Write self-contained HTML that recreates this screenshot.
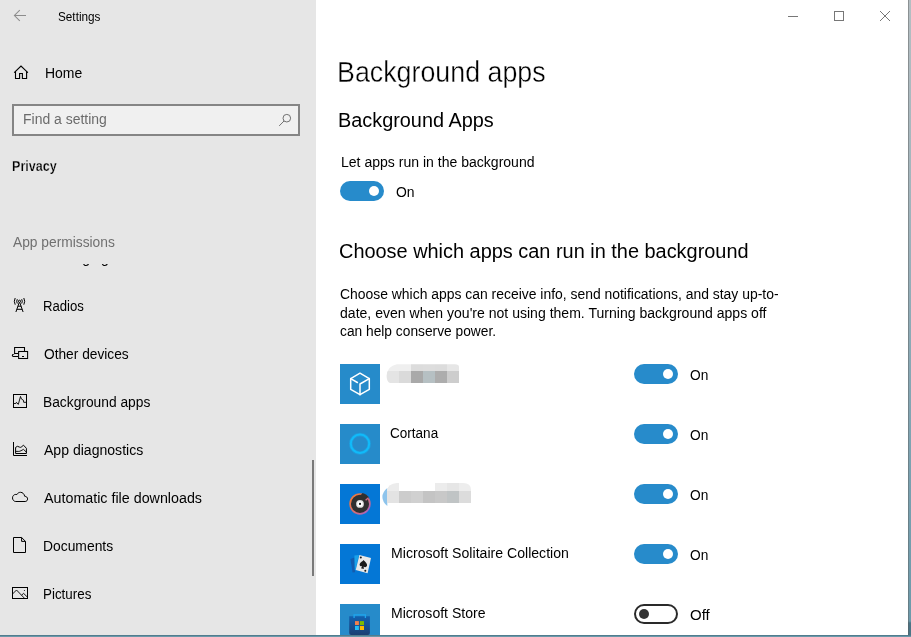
<!DOCTYPE html>
<html><head><meta charset="utf-8"><title>Settings</title>
<style>
html,body{margin:0;padding:0;}
body{will-change:transform;width:911px;height:637px;overflow:hidden;position:relative;background:#fff;font-family:"Liberation Sans",sans-serif;color:#000;font-size:14px;}
.abs{position:absolute;white-space:nowrap;line-height:1;}
#side{position:absolute;left:0;top:0;width:316px;height:637px;background:#e6e6e6;}
.t{position:absolute;white-space:nowrap;line-height:20px;height:20px;transform-origin:0 50%;}
.tog{position:absolute;width:44px;height:20px;border-radius:10px;background:#278bcb;}
.tog i{position:absolute;left:29px;top:5px;width:10px;height:10px;border-radius:5px;background:#fff;}
.tog.off{background:transparent;box-sizing:border-box;border:2px solid #2a2a2a;}
.tog.off i{left:3px;top:3px;background:#333;}
.tile{position:absolute;left:340px;width:40px;height:40px;background:#268bca;overflow:hidden;}
</style></head><body>
<div id="side"></div>
<div class="abs" style="left:12px;top:104px;width:284px;height:28px;border:2px solid #858585;background:#f0f0f0;"></div>
<div class="abs" style="left:43px;top:264px;width:200px;height:10px;overflow:hidden;"><div class="t" style="left:-2px;top:-16px;font-size:14px;">Messaging</div></div>
<div class="abs" style="left:312px;top:460px;width:2px;height:116px;background:#7a7a7a;"></div>
<svg class="abs" style="left:0;top:0" width="911" height="637" viewBox="0 0 911 637" fill="none">
<!-- back arrow -->
<path d="M19.8 10.1 L14.4 15.5 L19.8 20.9 M14.4 15.5 H26" stroke="#8c8c8c" stroke-width="1.05"/>
<!-- home -->
<path d="M14.2 72.7 L21 66 L27.9 72.7 M15.5 71.6 V78.5 H19.6 V73.5 H22.4 V78.5 H26.6 V71.6" stroke="#000" stroke-width="1.1"/>
<!-- search -->
<circle cx="286.8" cy="118.2" r="3.8" stroke="#707070" stroke-width="1"/><path d="M284 121 L279.2 125.9" stroke="#707070" stroke-width="1"/>
<!-- radios -->
<g stroke="#000" stroke-width="1">
<circle cx="19.5" cy="301.3" r="1.1"/>
<path d="M17.3 299.2 Q16.1 301.3 17.3 303.5 M21.7 299.2 Q22.9 301.3 21.7 303.5 M15.2 298 Q13.4 301.3 15.2 304.7 M23.8 298 Q25.6 301.3 23.8 304.7"/>
<path d="M19.2 302.6 L15.9 312 M19.8 302.6 L23.1 312 M17.8 306.2 H21.2 M16.8 309.3 H22.2"/>
</g>
<!-- other devices -->
<g stroke="#000" stroke-width="1.05">
<path d="M14.6 353.4 V347.5 H24.5 V351"/>
<path d="M14.1 353.4 H18 M14.6 353.6 Q12.3 354.4 12.3 355.6 Q12.3 356.4 13.4 356.4 H18"/>
<rect x="18.6" y="351.5" width="9" height="7"/>
<path d="M22 356.4 H24"/>
</g>
<!-- background apps -->
<g stroke="#000" stroke-width="1">
<rect x="13.5" y="394.5" width="13" height="13"/>
<path d="M13.5 403.5 H15.9 L16.4 402.3 L18.3 404.4 L20.5 396.4 L21.4 399 L23.4 400.2 L23.7 402.3 H26.5" stroke-width=".9"/>
</g>
<!-- app diagnostics -->
<g stroke="#000" stroke-width="1">
<path d="M13.5 442 V455.5 H27"/>
<path d="M15.6 447.4 V453.5 H26.4 V448.3 L23.5 445.2 L21.2 447.1 Q20.4 447.6 19.5 447.1 Q17.3 445.4 15.6 447.4 Z" stroke-width="1"/>
<path d="M15.6 451.4 H18.8 Q19.8 451.4 21 450.7 L23.5 449.4 L26.4 452.2" stroke-width=".9"/>
</g>
<!-- cloud -->
<path d="M15.8 501.5 H25.2 C26.6 501.5 27.6 500.3 27.6 498.9 C27.6 497.4 26.3 496.3 24.7 496.3 C24.3 494 22.6 492.3 20.5 492.3 C18.9 492.3 17.6 493.2 16.9 494.5 C16.5 494.4 16.2 494.4 15.8 494.4 C13.9 494.4 12.5 496 12.5 497.9 C12.5 499.8 13.9 501.5 15.8 501.5 Z" stroke="#000" stroke-width="1"/>
<!-- documents -->
<path d="M13.5 537.5 H21.6 L25.5 541.4 V552.5 H13.5 Z M21.6 537.5 V541.4 H25.5" stroke="#000" stroke-width="1"/>
<!-- pictures -->
<g stroke="#000" stroke-width="1">
<rect x="12.5" y="587.5" width="15" height="11"/>
<path d="M12.5 594 L16.5 590 L24.5 598.3 M21.6 595.3 L23.5 593.3 L27.5 597.2" stroke-width=".9"/>
<circle cx="24.4" cy="590.5" r=".55" fill="#000" stroke="none"/>
</g>
<!-- window controls -->
<g stroke="#777" stroke-width="1">
<path d="M788 16.5 H798"/>
<rect x="834.5" y="11.5" width="9" height="9"/>
<path d="M880 11 L890 21 M890 11 L880 21" stroke-width="1"/>
</g>
</svg>

<div class="t" id="settings" style="left:58.20px;top:7.16px;font-size:12.5px;letter-spacing:0.000px;transform:scaleX(0.9400);">Settings</div>
<div class="t" id="home" style="left:44.64px;top:63.15px;font-size:14px;letter-spacing:0.000px;transform:scaleX(0.9984);">Home</div>
<div class="t" id="find" style="left:23.44px;top:109.15px;font-size:14px;letter-spacing:0.000px;transform:scaleX(0.9975);color:#6b6b6b;">Find a setting</div>
<div class="t" id="privacy" style="left:12.44px;top:156.15px;font-size:14px;letter-spacing:0.000px;transform:scaleX(0.8980);font-weight:bold;-webkit-text-stroke:0.25px #e6e6e6;">Privacy</div>
<div class="t" id="appperm" style="left:12.77px;top:232.15px;font-size:14px;letter-spacing:0.000px;transform:scaleX(0.9839);color:#707070;">App permissions</div>
<div class="t" id="n1" style="left:42.90px;top:296.15px;font-size:14px;letter-spacing:0.000px;transform:scaleX(0.9389);">Radios</div>
<div class="t" id="n2" style="left:43.54px;top:344.15px;font-size:14px;letter-spacing:0.000px;transform:scaleX(0.9801);">Other devices</div>
<div class="t" id="n3" style="left:42.90px;top:392.15px;font-size:14px;letter-spacing:0.000px;transform:scaleX(0.9848);">Background apps</div>
<div class="t" id="n4" style="left:43.85px;top:440.15px;font-size:14px;letter-spacing:0.000px;transform:scaleX(1.0039);">App diagnostics</div>
<div class="t" id="n5" style="left:43.60px;top:488.15px;font-size:14px;letter-spacing:0.000px;transform:scaleX(1.0203);">Automatic file downloads</div>
<div class="t" id="n6" style="left:42.90px;top:536.15px;font-size:14px;letter-spacing:0.000px;transform:scaleX(0.9903);">Documents</div>
<div class="t" id="n7" style="left:42.90px;top:584.15px;font-size:14px;letter-spacing:0.000px;transform:scaleX(0.9559);">Pictures</div>
<div class="t" id="title" style="left:337.27px;top:62.15px;font-size:28.6px;letter-spacing:0.000px;transform:scaleX(0.9377);-webkit-text-stroke:0.38px #fff;">Background apps</div>
<div class="t" id="sub1" style="left:338.05px;top:110.16px;font-size:19.5px;letter-spacing:0.000px;transform:scaleX(1.0185);">Background Apps</div>
<div class="t" id="let" style="left:340.64px;top:152.15px;font-size:14px;letter-spacing:0.000px;transform:scaleX(1.0026);">Let apps run in the background</div>
<div class="t" id="on0" style="left:395.61px;top:182.15px;font-size:14px;letter-spacing:0.000px;transform:scaleX(0.9953);">On</div>
<div class="t" id="sub2" style="left:338.73px;top:241.16px;font-size:19.5px;letter-spacing:0.000px;transform:scaleX(1.0211);">Choose which apps can run in the background</div>
<div class="t" id="p1" style="left:340.28px;top:284.15px;font-size:14px;letter-spacing:0.000px;transform:scaleX(0.9938);">Choose which apps can receive info, send notifications, and stay up-to-</div>
<div class="t" id="p2" style="left:340.28px;top:303.15px;font-size:14px;letter-spacing:0.000px;transform:scaleX(1.0034);">date, even when you're not using them. Turning background apps off</div>
<div class="t" id="p3" style="left:340.41px;top:321.15px;font-size:14px;letter-spacing:0.000px;transform:scaleX(0.9829);">can help conserve power.</div>
<div class="t" id="on1" style="left:689.80px;top:365.15px;font-size:14px;letter-spacing:0.000px;transform:scaleX(0.9800);">On</div>
<div class="t" id="a2" style="left:390.14px;top:423.15px;font-size:14px;letter-spacing:0.000px;transform:scaleX(0.9669);">Cortana</div>
<div class="t" id="on2" style="left:689.80px;top:425.15px;font-size:14px;letter-spacing:0.000px;transform:scaleX(0.9800);">On</div>
<div class="t" id="on3" style="left:689.80px;top:485.15px;font-size:14px;letter-spacing:0.000px;transform:scaleX(0.9800);">On</div>
<div class="t" id="a4" style="left:390.64px;top:543.15px;font-size:14px;letter-spacing:0.000px;transform:scaleX(1.0073);">Microsoft Solitaire Collection</div>
<div class="t" id="on4" style="left:689.80px;top:545.15px;font-size:14px;letter-spacing:0.000px;transform:scaleX(0.9800);">On</div>
<div class="t" id="a5" style="left:390.64px;top:603.15px;font-size:14px;letter-spacing:0.000px;transform:scaleX(1.0042);">Microsoft Store</div>
<div class="t" id="off" style="left:689.80px;top:605.15px;font-size:14px;letter-spacing:0.000px;transform:scaleX(1.0700);">Off</div>

<div class="tog" style="left:340px;top:181px;"><i></i></div>

<div class="tile" style="top:364px;"></div>
<div class="tog" style="left:634px;top:364px;"><i></i></div>
<div class="tile" style="top:424px;"></div>
<div class="tog" style="left:634px;top:424px;"><i></i></div>
<div class="tile" style="top:484px;background:#0477d6;"></div>
<div class="tog" style="left:634px;top:484px;"><i></i></div>
<div class="tile" style="top:544px;background:#0477d6;"></div>
<div class="tog" style="left:634px;top:544px;"><i></i></div>
<div class="tile" style="top:604px;"></div>
<div class="tog off" style="left:634px;top:604px;"><i></i></div>
<svg class="abs" style="left:0;top:0" width="911" height="637" viewBox="0 0 911 637" fill="none">
<defs>
<linearGradient id="gr" x1="0" y1="0" x2="1" y2="1"><stop offset="0" stop-color="#f57c2e"/><stop offset=".5" stop-color="#d9706a"/><stop offset="1" stop-color="#a060d0"/></linearGradient>
<linearGradient id="bag" x1="0" y1="0" x2="0" y2="1"><stop offset="0" stop-color="#1160b0"/><stop offset="1" stop-color="#1c3f72"/></linearGradient>
<clipPath id="c1"><path d="M390 383 Q386.9 382 386.6 376 Q387 366 397 364.2 H455 Q459 364.2 459 367 V383 Z"/></clipPath>
<clipPath id="c2"><path d="M387 503 V490 Q388 484 397 483 H463 Q471 483 471 490 V503 Z"/></clipPath>
</defs>
<!-- tile 1 cube -->
<g stroke="#fff" stroke-width="1.5" stroke-linejoin="round" stroke-linecap="round">
<path d="M360 373.2 L369.3 378.6 V389.3 L360 394.7 L350.7 389.3 V378.6 Z"/>
<path d="M369.3 378.6 L360 384 V394.7 M350.7 378.6 L357.4 382.5"/>
</g>
<!-- mosaic 1 -->
<g clip-path="url(#c1)">
<rect x="386" y="364" width="13" height="7" fill="#efefef"/><rect x="399" y="364" width="12" height="7" fill="#efefef"/><rect x="411" y="364" width="12" height="7" fill="#dcdcdc"/><rect x="423" y="364" width="12" height="7" fill="#dddddd"/><rect x="435" y="364" width="12" height="7" fill="#dcdcdc"/><rect x="447" y="364" width="12" height="7" fill="#e6e6e6"/>
<rect x="386" y="371" width="13" height="12" fill="#e4e4e4"/><rect x="399" y="371" width="12" height="12" fill="#dadada"/><rect x="411" y="371" width="12" height="12" fill="#a9a9a9"/><rect x="423" y="371" width="12" height="12" fill="#b6c0c3"/><rect x="435" y="371" width="12" height="12" fill="#adadad"/><rect x="447" y="371" width="12" height="12" fill="#cdcdcd"/>
</g>
<!-- tile 2 cortana -->
<circle cx="360" cy="443.8" r="9.2" stroke="#14b4f5" stroke-opacity=".4" stroke-width="3.6"/>
<circle cx="360" cy="443.8" r="9.2" stroke="#10bbfa" stroke-width="2"/>
<!-- tile 3 groove -->
<circle cx="360" cy="503.9" r="9.9" fill="#303030" stroke="url(#gr)" stroke-width="1.7"/>
<path d="M362.5 493 A10.8 10.8 0 0 1 369.2 498 L366 500.4 L360 496 Z" fill="#303030"/>
<path d="M365.6 500.2 L368.5 497.7" stroke="#d06a8c" stroke-width="1.4"/>
<circle cx="360" cy="503.9" r="3.9" fill="#dcdcdc"/><circle cx="360" cy="503.9" r="2.7" fill="#fff"/><circle cx="360" cy="503.9" r="1.05" fill="#111"/>
<!-- mosaic 2 -->
<path d="M387.3 488 Q382.4 492 382.4 497 Q382.4 502 387.3 506 Z" fill="#8ec4ec"/>
<g clip-path="url(#c2)">
<rect x="387" y="483" width="12" height="8" fill="#ececec"/><rect x="435" y="483" width="12" height="8" fill="#ececec"/><rect x="447" y="483" width="12" height="8" fill="#e6e6e6"/><rect x="459" y="483" width="12" height="8" fill="#ededed"/>
<rect x="387" y="491" width="12" height="12" fill="#e3e3e3"/><rect x="399" y="491" width="12" height="12" fill="#cccccc"/><rect x="411" y="491" width="12" height="12" fill="#d0d0d0"/><rect x="423" y="491" width="12" height="12" fill="#c4c4c4"/><rect x="435" y="491" width="12" height="12" fill="#c8c8c8"/><rect x="447" y="491" width="12" height="12" fill="#c0c4c5"/><rect x="459" y="491" width="12" height="12" fill="#dcdcdc"/>
</g>
<!-- tile 4 solitaire -->
<path d="M350.4 559 L354.6 557.6 L355 572.2 L352.6 572.6 Z" fill="#145cae"/>
<path d="M354.4 555.5 L359 555 L355.4 570.4 L354.8 570 Z" fill="#1aa2ea"/>
<path d="M359.4 555.1 L371 558.1 L367.6 573.2 L355.7 570.1 Z" fill="#e9e9e9"/>
<g fill="#1a1a1a">
<path d="M363.6 559.9 C364.9 561.8 367.7 563.3 367 565.8 C366.5 567.4 364.6 567.6 363.7 566.6 L363.8 568.9 L361 568.2 L362.2 566.2 C360.8 566.7 359.2 565.6 359.7 563.9 C360.3 561.7 362.8 561.3 363.6 559.9 Z"/>
<circle cx="360.8" cy="557.6" r="1"/><circle cx="365.3" cy="570.8" r="1"/>
</g>
<!-- tile 5 store -->
<path d="M349.2 616.2 H369.9 V633 Q369.9 635 367.9 635 H351.2 Q349.2 635 349.2 633 Z" fill="url(#bag)"/>
<path d="M354.1 618 V614.9 H365.4 V618" stroke="#1ea5ee" stroke-width="1.3"/>
<rect x="355" y="621.1" width="3.9" height="3.9" fill="#f1804c"/><rect x="359.9" y="621.1" width="4.1" height="3.9" fill="#7fba00"/><rect x="355" y="625.9" width="3.9" height="4.1" fill="#1fbcf8"/><rect x="359.9" y="625.9" width="4.1" height="4.1" fill="#ffb900"/>
</svg>


<div class="abs" style="left:908px;top:0;width:3px;height:637px;background:linear-gradient(to bottom,#b4bec2 0%,#a3b5bc 30%,#8fabb6 50%,#7aa1b0 75%,#6d9aaa 97.5%,#4b7485 97.8%,#4b7485 100%);"></div>
<div class="abs" style="left:908px;top:0;width:1px;height:637px;background:rgba(90,90,90,.45);"></div>
<div class="abs" style="left:0;top:635px;width:911px;height:1px;background:#527d8e;"></div>
<div class="abs" style="left:0;top:636px;width:911px;height:1px;background:#6a98a9;"></div>
</body></html>
